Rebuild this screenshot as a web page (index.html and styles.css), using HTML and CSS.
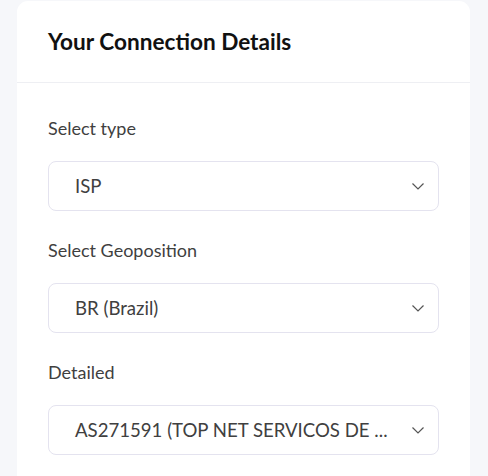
FILE: index.html
```html
<!DOCTYPE html>
<html>
<head>
<meta charset="utf-8">
<link rel="stylesheet" href="styles.css">
</head>
<body>
<div class="card">
  <div class="card-header">
    <h2 class="title">Your Connection Details</h2>
  </div>
  <div class="card-body">
    <div class="field">
      <div class="label">Select type</div>
      <div class="select">
        <span class="value">ISP</span>
        <svg class="chev" width="12" height="7" viewBox="0 0 12 7"><path d="M0.5 0.5 L6 6 L11.5 0.5" fill="none" stroke="#555" stroke-width="1.2"/></svg>
      </div>
    </div>
    <div class="field">
      <div class="label">Select Geoposition</div>
      <div class="select">
        <span class="value">BR (Brazil)</span>
        <svg class="chev" width="12" height="7" viewBox="0 0 12 7"><path d="M0.5 0.5 L6 6 L11.5 0.5" fill="none" stroke="#555" stroke-width="1.2"/></svg>
      </div>
    </div>
    <div class="field">
      <div class="label">Detailed</div>
      <div class="select">
        <span class="value">AS271591 (TOP NET SERVICOS DE ...</span>
        <svg class="chev" width="12" height="7" viewBox="0 0 12 7"><path d="M0.5 0.5 L6 6 L11.5 0.5" fill="none" stroke="#555" stroke-width="1.2"/></svg>
      </div>
    </div>
  </div>
</div>
</body>
</html>
```

FILE: styles.css
```css
* { box-sizing: border-box; }
html, body {
  margin: 0;
  padding: 0;
  background: #f6f7fa;
  font-family: "Lato", "Noto Sans", sans-serif;
}
body {
  padding: 1px 18px 0 17px;
  height: 476px;
  overflow: hidden;
}
.card {
  background: #ffffff;
  border-radius: 11px 11px 0 0;
  width: 453px;
  height: 475px;
}
.card-header {
  height: 82px;
  border-bottom: 1px solid #eeeff3;
  display: flex;
  align-items: center;
  padding: 0 31px;
}
.title {
  margin: 0;
  font-size: 22.6px;
  font-weight: 700;
  color: #111111;
}
.card-body {
  padding: 33px 31px 0 31px;
  display: flex;
  flex-direction: column;
  gap: 27px;
}
.field {
  display: flex;
  flex-direction: column;
  gap: 21px;
}
.label {
  font-size: 18px;
  line-height: 24px;
  color: #3f3f3f;
}
.select {
  width: 391px;
  height: 50px;
  border: 1px solid #e4e3ef;
  border-radius: 8px;
  display: flex;
  align-items: center;
  justify-content: space-between;
  padding: 0 14px 0 26px;
}
.value {
  font-size: 18.6px;
  color: #404040;
}
.chev {
  display: block;
}
```
